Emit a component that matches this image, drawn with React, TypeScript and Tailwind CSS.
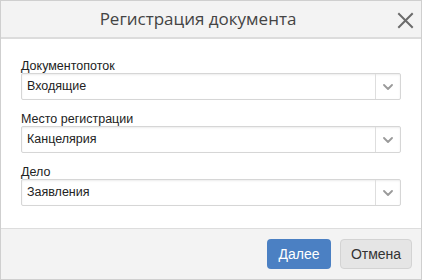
import React from "react";

function Chevron() {
  return (
    <svg width="10" height="6" viewBox="0 0 10 6" fill="none">
      <path d="M1 1 L5 5 L9 1" stroke="#9a9a9a" strokeWidth="1.8" strokeLinecap="round" strokeLinejoin="round" />
    </svg>
  );
}

function Field({ label, value }: { label: string; value: string }) {
  return (
    <div className="flex flex-col">
      <div className="pt-[1px] text-[12.5px] leading-[13px] text-[#222]" style={{ fontFamily: '"Liberation Sans", Arial, sans-serif' }}>
        {label}
      </div>
      <div className="flex h-[27px] items-stretch rounded-[2px] border border-[#d6d6d6] bg-white shadow-[inset_0_1px_2px_rgba(0,0,0,0.08)]">
        <div className="flex flex-1 items-center pl-[5px] text-[12.5px] text-[#222]" style={{ fontFamily: '"Liberation Sans", Arial, sans-serif' }}>
          {value}
        </div>
        <div className="flex w-[25px] items-center justify-center border-l border-[#dedede]">
          <Chevron />
        </div>
      </div>
    </div>
  );
}

export default function App() {
  return (
    <div className="h-[280px] w-[422px] bg-white">
      <div className="flex h-[280px] w-[422px] flex-col border border-[#cfcfcf] bg-white">
        <div className="relative flex h-[38px] items-center justify-center border-b-2 border-[#dcdcdc] bg-[#f3f3f3] pr-[26px]">
          <span className="text-[17px] text-[#444]" style={{ fontFamily: '"Open Sans", sans-serif' }}>
            Регистрация документа
          </span>
          <svg className="absolute right-[7px] top-[11px]" width="17" height="17" viewBox="0 0 17 17" fill="none">
            <path d="M2 2 L15 15 M15 2 L2 15" stroke="#6b6b6b" strokeWidth="2" strokeLinecap="square" />
          </svg>
        </div>
        <div className="flex flex-1 flex-col gap-[12px] px-5 pt-[20px]">
          <Field label="Документопоток" value="Входящие" />
          <Field label="Место регистрации" value="Канцелярия" />
          <Field label="Дело" value="Заявления" />
        </div>
        <div className="flex h-[51px] items-center justify-end gap-[9px] border-t border-[#dddddd] bg-[#f3f3f3] pr-[9px]">
          <button
            className="h-[30px] w-[64px] rounded-[4px] bg-[#4b80c3] text-[14px] text-white"
            style={{ fontFamily: '"Liberation Sans", Arial, sans-serif' }}
          >
            Далее
          </button>
          <button
            className="h-[30px] w-[72px] rounded-[4px] border border-[#d3d3d3] bg-[#e5e5e5] text-[14px] text-[#333]"
            style={{ fontFamily: '"Liberation Sans", Arial, sans-serif' }}
          >
            Отмена
          </button>
        </div>
      </div>
    </div>
  );
}
